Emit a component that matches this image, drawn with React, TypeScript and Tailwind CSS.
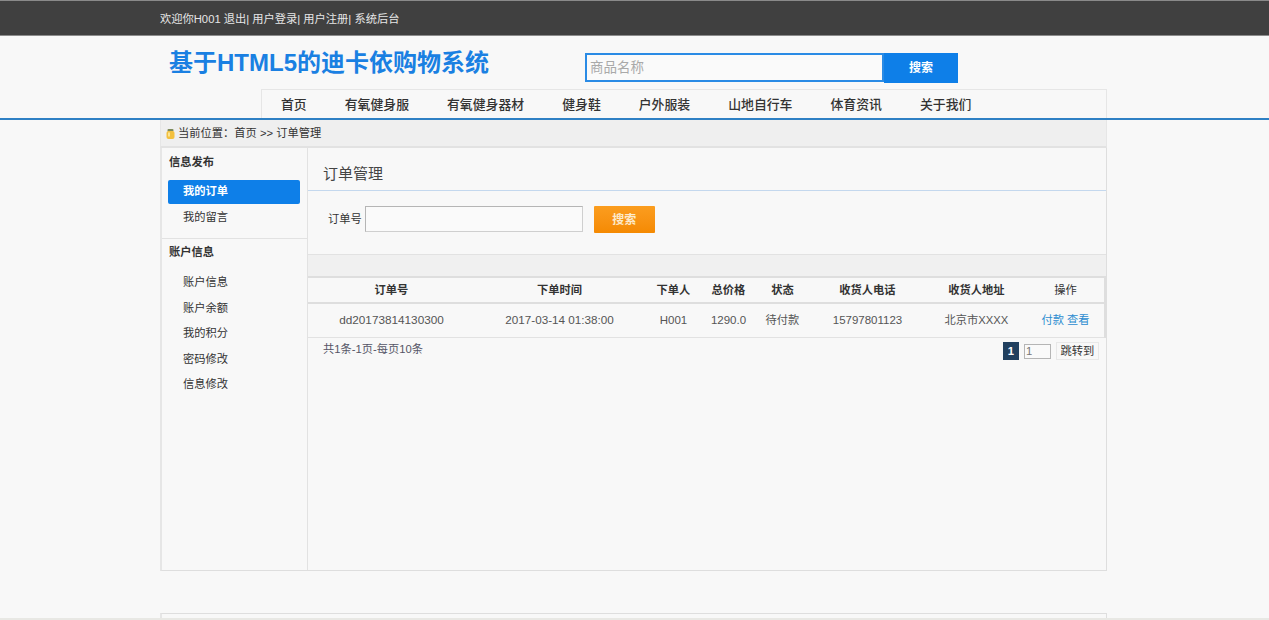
import React from 'react';

const NAV_ITEMS = ['首页', '有氧健身服', '有氧健身器材', '健身鞋', '户外服装', '山地自行车', '体育资讯', '关于我们'];

const COLUMNS = [
  { label: '订单号', width: 'w-[167px]', value: 'dd20173814130300', size: 'text-[11.75px]' },
  { label: '下单时间', width: 'w-[169px]', value: '2017-03-14 01:38:00', size: 'text-[11.7px]' },
  { label: '下单人', width: 'w-[59px]', value: 'H001', size: 'text-[11.5px]' },
  { label: '总价格', width: 'w-[51px]', value: '1290.0', size: 'text-[11.5px]' },
  { label: '状态', width: 'w-[57px]', value: '待付款', size: 'text-[11.25px]' },
  { label: '收货人电话', width: 'w-[113px]', value: '15797801123', size: 'text-[11.5px]' },
  { label: '收货人地址', width: 'w-[105px]', value: '北京市XXXX', size: 'text-[11.25px]' },
];

const ACCOUNT_LINKS = ['账户信息', '账户余额', '我的积分', '密码修改', '信息修改'];

function JarIcon() {
  return (
    <svg width="9" height="10" viewBox="0 0 9 10" className="shrink-0">
      <rect x="1.5" y="0" width="6" height="2.5" rx="1" fill="#7d8a5a" />
      <rect x="0.5" y="2" width="8" height="8" rx="2" fill="#f3c03e" />
      <rect x="2" y="3.5" width="2" height="4" fill="#fbe493" />
    </svg>
  );
}

export default function App() {
  return (
    <div className="h-[620px] overflow-hidden bg-[#f8f8f8] border-b-2 border-b-[#e8e8e4] text-[11.25px] text-[#333] font-['Liberation_Sans','Noto_Sans_CJK_SC',sans-serif]">
      {/* top bar */}
      <div className="h-[36px] bg-[#404040] border-t border-t-[#8a8a8a] border-b border-b-[#8c8c8c]">
        <div className="w-[947px] ml-[160px] leading-[36px] text-[#e6e6e6]">
          欢迎你H001 退出| 用户登录| 用户注册| 系统后台
        </div>
      </div>

      {/* logo and search */}
      <div className="h-[53px] ml-[169px] flex">
        <div className="w-[416px] pt-[9px] text-[24px] leading-[36px] font-bold text-[#1a80e2]">
          基于HTML5的迪卡依购物系统
        </div>
        <div className="flex mt-[17px] h-[30px]">
          <div className="w-[299px] h-[29px] border-2 border-[#2a8be5] bg-[#fafafa] pl-[3px] text-[13.5px] leading-[25px] text-[#a9a9a9]">
            商品名称
          </div>
          <button className="w-[74px] h-[30px] bg-[#0e7fe8] text-white text-[12px] font-bold">搜索</button>
        </div>
      </div>

      {/* nav */}
      <div className="border-b-2 border-b-[#2e80c4]">
        <div className="ml-[261px] w-[846px] h-[29px] flex border border-b-0 border-[#e6e6e6]">
          {NAV_ITEMS.map((item) => (
            <div key={item} className="px-[19px] text-[12.87px] leading-[29px] font-medium text-[#333]">
              {item}
            </div>
          ))}
        </div>
      </div>

      <div className="ml-[160px] w-[947px]">
        {/* breadcrumb */}
        <div className="h-[28px] bg-[#efefef] border-b-2 border-b-[#e2e2e2] border-x border-x-[#e6e6e6] flex items-center gap-[3px] pl-[5px] pt-[1px]">
          <JarIcon />
          <span>当前位置：首页 &gt;&gt; 订单管理</span>
        </div>

        <div className="h-[423px] flex border border-t-0 border-[#dedede] border-l-2 border-l-[#e6e6e6]">
          {/* sidebar */}
          <div className="w-[146px] shrink-0 border-r border-r-[#e2e2e2]">
            <div className="h-[91px] border-b border-b-[#e2e2e2]">
              <div className="pl-[7px] pt-[6px] leading-[17px] font-bold">信息发布</div>
              <div className="mt-[9px] ml-[6px] w-[132px] h-[24px] bg-[#0e7fe8] rounded-[2px] pl-[15px] leading-[23px] text-white font-bold">
                我的订单
              </div>
              <div className="pl-[21px] mt-[1px] leading-[25px]">我的留言</div>
            </div>
            <div className="pl-[7px] pt-[5px] leading-[17px] font-bold">账户信息</div>
            <div className="pl-[21px] pt-[9px]">
              {ACCOUNT_LINKS.map((link) => (
                <div key={link} className="h-[25.5px] leading-[25px]">{link}</div>
              ))}
            </div>
          </div>

          {/* content */}
          <div className="flex-1 min-w-0">
            <div className="h-[43px] border-b border-b-[#c4d8ee] pl-[15px] pt-[9px] text-[15px] leading-[33px] text-[#444]">
              订单管理
            </div>
            <div className="h-[63px] flex items-start pl-[20px] pt-[15px]">
              <span className="leading-[26px]">订单号</span>
              <div className="ml-[3px] w-[218px] h-[26px] border border-[#cfcfcf] border-t-[#b5b5b5] border-l-[#b5b5b5] bg-[#fafafa]" />
              <button className="ml-[11px] w-[61px] h-[27px] rounded-[1px] bg-gradient-to-b from-[#fb9d1e] to-[#f58a02] text-[12px] font-bold text-[#fdeacb]">
                搜索
              </button>
            </div>

            <div className="h-[22px] bg-[#f0f0f0] border-t border-t-[#e2e2e2]" />

            <table className="w-full table-fixed border-collapse border-t-2 border-t-[#dedede] border-r-2 border-r-[#dedede]">
              <thead>
                <tr className="h-[26px] border-b-2 border-b-[#dedede]">
                  {COLUMNS.map((col) => (
                    <th key={col.label} className={`${col.width} p-0 text-center font-bold text-[#333]`}>{col.label}</th>
                  ))}
                  <th className="p-0 pr-[2px] text-center font-normal">操作</th>
                </tr>
              </thead>
              <tbody>
                <tr className="h-[34px] border-b border-b-[#e2e2e2]">
                  {COLUMNS.map((col) => (
                    <td key={col.label} className={`${col.size} p-0 text-center text-[#555]`}>{col.value}</td>
                  ))}
                  <td className="p-0 pr-[2px] text-center text-[#2b8cd0]">付款 查看</td>
                </tr>
              </tbody>
            </table>

            {/* pagination */}
            <div className="flex pl-[15px] pr-[7px]">
              <span className="flex-1 pt-[3px] leading-[17px] text-[#556]">共1条-1页-每页10条</span>
              <div className="flex items-start pt-[4px]">
                <span className="w-[16px] h-[18px] bg-[#21405f] text-white text-center leading-[18px] font-bold">1</span>
                <span className="ml-[5px] w-[27px] h-[15px] mt-[2px] border border-[#b5b5b5] bg-[#fafafa] pl-[1px] leading-[13px] text-[#777]">1</span>
                <span className="ml-[5px] w-[43px] h-[18px] border border-[#e8e8e8] text-center leading-[16px]">跳转到</span>
              </div>
            </div>
          </div>
        </div>

        {/* footer box, cut off by the window */}
        <div className="mt-[42px] h-[40px] border border-[#dedede] border-l-2 border-l-[#e6e6e6]" />
      </div>
    </div>
  );
}
